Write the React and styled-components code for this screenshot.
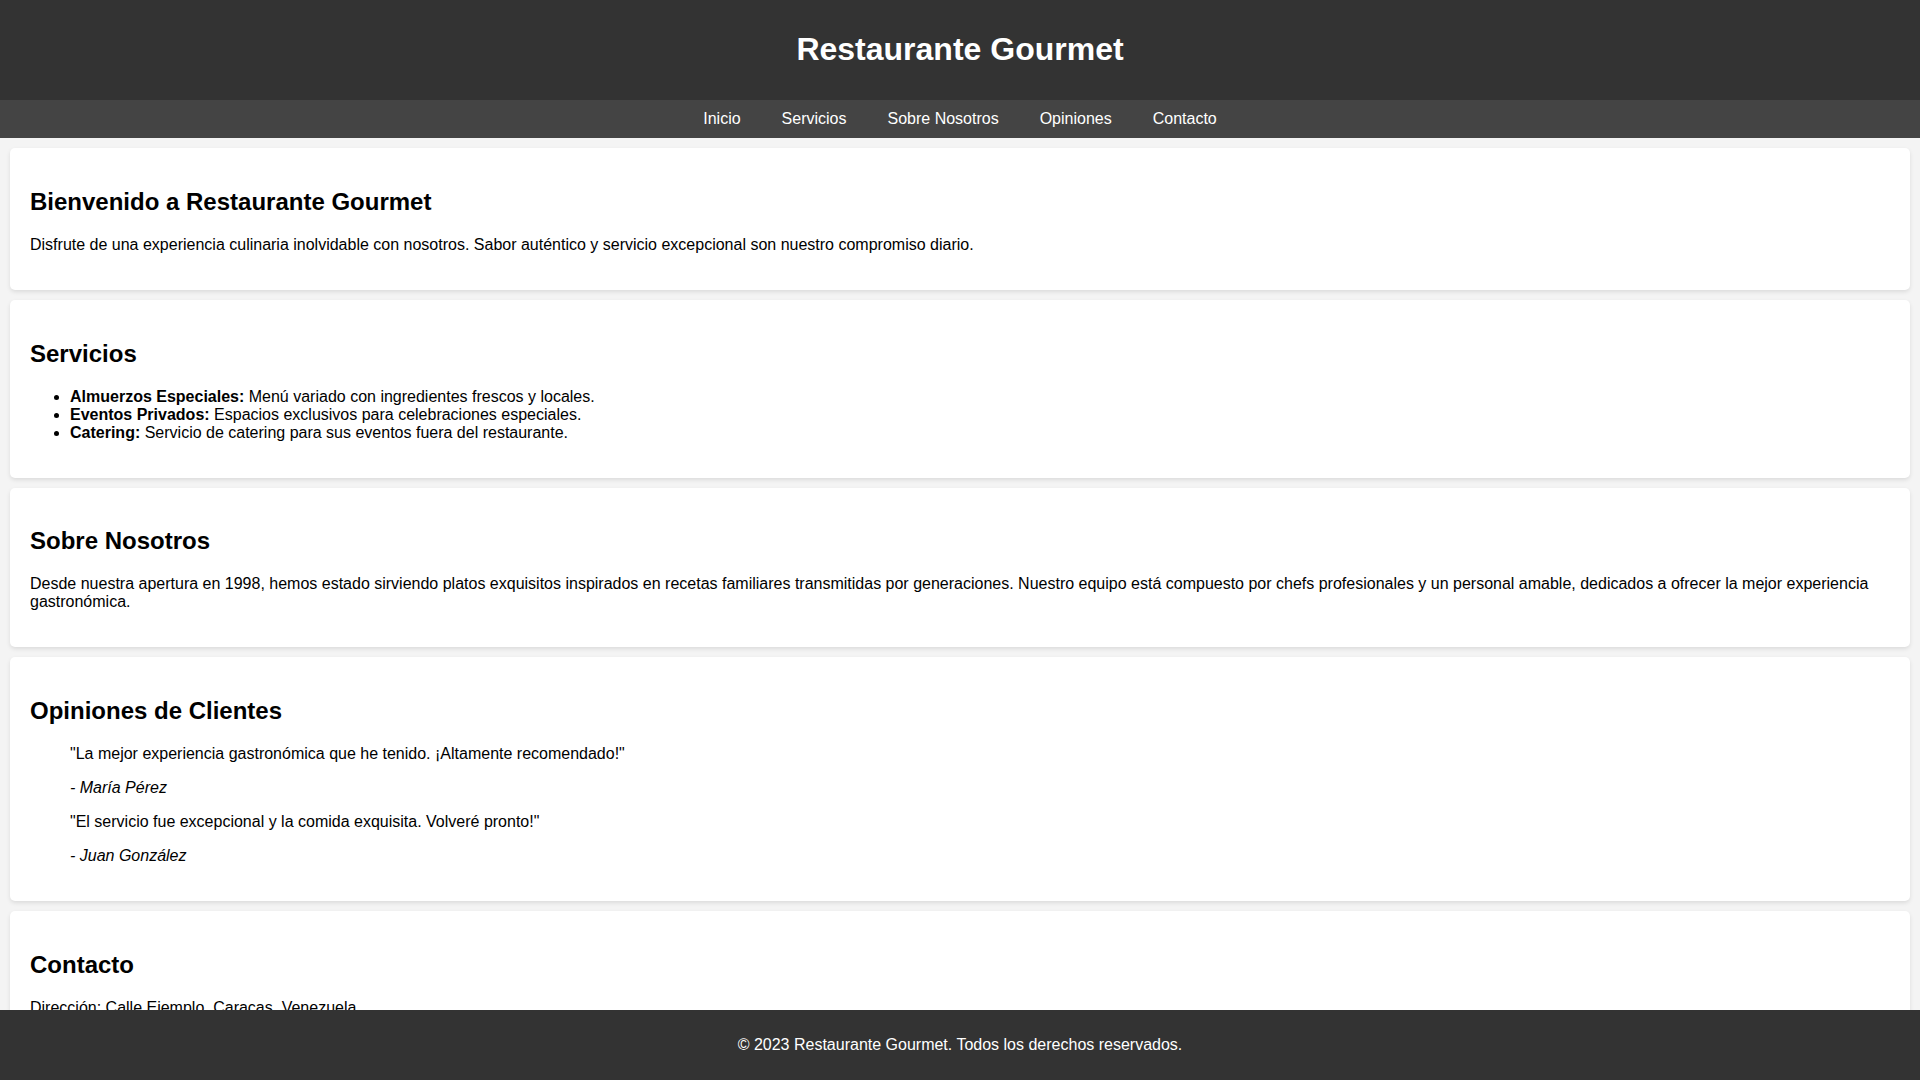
import React from "react";
import styled, { createGlobalStyle } from "styled-components";

const GlobalStyle = createGlobalStyle`
  html, body {
    margin: 0;
    padding: 0;
  }
  body {
    font-family: "Liberation Sans", Arial, sans-serif;
    background-color: #f4f4f4;
    color: #000;
  }
  ::-webkit-scrollbar {
    width: 10px;
    background: #fff;
  }
  ::-webkit-scrollbar-thumb {
    background: #111;
    border-radius: 4px;
    border: 2px solid #fff;
  }
`;

const Header = styled.header`
  background-color: #333;
  color: #fff;
  padding: 10px 0;
  text-align: center;
`;

const Title = styled.h1`
  font-size: 2em;
  margin: 0.67em 0;
  font-weight: bold;
`;

const Nav = styled.nav`
  background-color: #444;
  display: flex;
  justify-content: center;
  padding: 10px 0;
`;

const NavLink = styled.a`
  color: #fff;
  text-decoration: none;
  font-size: 16px;
  line-height: normal;
  padding: 0 20px;
  margin: 0 0.5px;
`;

const Main = styled.main`
  padding: 10px;
  display: flex;
  flex-direction: column;
  gap: 10px;
`;

const Card = styled.section`
  background: #fff;
  padding: 20px;
  border-radius: 5px;
  box-shadow: 0 2px 4px rgba(0, 0, 0, 0.1);
`;

const SectionTitle = styled.h2`
  font-size: 1.5em;
  margin: 0.83em 0;
`;

const Text = styled.p`
  margin: 1em 0;
  font-style: ${(p) => (p.$italic ? "italic" : "normal")};
`;

const List = styled.ul`
  margin: 1em 0;
  padding-left: 40px;
`;

const Quote = styled.blockquote`
  margin: 1em 40px;
`;

const Form = styled.form`
  display: flex;
  flex-direction: column;
  gap: 10px;
  margin-bottom: 16px;
`;

const Label = styled.label`
  display: flex;
  flex-direction: column;
  gap: 4px;
  font-size: 16px;
`;

const Input = styled.input`
  height: 32px;
  padding: 0 8px;
  border: 1px solid #ccc;
  border-radius: 4px;
  font-family: inherit;
`;

const TextArea = styled.textarea`
  height: 64px;
  padding: 8px;
  border: 1px solid #ccc;
  border-radius: 4px;
  font-family: inherit;
`;

const Button = styled.button`
  align-self: flex-start;
  background: #333;
  color: #fff;
  border: none;
  padding: 10px 20px;
  border-radius: 4px;
  font-family: inherit;
  font-size: 16px;
`;

const Footer = styled.footer`
  position: fixed;
  left: 0;
  right: 0;
  bottom: 0;
  background-color: #333;
  color: #fff;
  text-align: center;
  padding: 10px 0;
`;

export default function App() {
  return (
    <>
      <GlobalStyle />
      <Header>
        <Title>Restaurante Gourmet</Title>
      </Header>
      <Nav>
        <NavLink href="#inicio">Inicio</NavLink>
        <NavLink href="#servicios">Servicios</NavLink>
        <NavLink href="#nosotros">Sobre Nosotros</NavLink>
        <NavLink href="#opiniones">Opiniones</NavLink>
        <NavLink href="#contacto">Contacto</NavLink>
      </Nav>
      <Main>
        <Card id="inicio">
          <SectionTitle>Bienvenido a Restaurante Gourmet</SectionTitle>
          <Text>
            Disfrute de una experiencia culinaria inolvidable con nosotros. Sabor auténtico y servicio
            excepcional son nuestro compromiso diario.
          </Text>
        </Card>
        <Card id="servicios">
          <SectionTitle>Servicios</SectionTitle>
          <List>
            <li>
              <strong>Almuerzos Especiales:</strong> Menú variado con ingredientes frescos y locales.
            </li>
            <li>
              <strong>Eventos Privados:</strong> Espacios exclusivos para celebraciones especiales.
            </li>
            <li>
              <strong>Catering:</strong> Servicio de catering para sus eventos fuera del restaurante.
            </li>
          </List>
        </Card>
        <Card id="nosotros">
          <SectionTitle>Sobre Nosotros</SectionTitle>
          <Text>
            Desde nuestra apertura en 1998, hemos estado sirviendo platos exquisitos inspirados en recetas
            familiares transmitidas por generaciones. Nuestro equipo está compuesto por chefs profesionales
            y un personal amable, dedicados a ofrecer la mejor experiencia gastronómica.
          </Text>
        </Card>
        <Card id="opiniones">
          <SectionTitle>Opiniones de Clientes</SectionTitle>
          <Quote>
            <Text>"La mejor experiencia gastronómica que he tenido. ¡Altamente recomendado!"</Text>
            <Text $italic>- María Pérez</Text>
          </Quote>
          <Quote>
            <Text>"El servicio fue excepcional y la comida exquisita. Volveré pronto!"</Text>
            <Text $italic>- Juan González</Text>
          </Quote>
        </Card>
        <Card id="contacto">
          <SectionTitle>Contacto</SectionTitle>
          <Text>Dirección: Calle Ejemplo, Caracas, Venezuela</Text>
          <Text>Teléfono: +58 212 555 1234</Text>
          <Text>Email: info@restaurantegourmet.com</Text>
          <Form onSubmit={(e) => e.preventDefault()}>
            <Label>
              Nombre
              <Input type="text" />
            </Label>
            <Label>
              Correo
              <Input type="email" />
            </Label>
            <Label>
              Mensaje
              <TextArea />
            </Label>
            <Button type="submit">Enviar</Button>
          </Form>
        </Card>
      </Main>
      <Footer>
        <Text>© 2023 Restaurante Gourmet. Todos los derechos reservados.</Text>
      </Footer>
    </>
  );
}
